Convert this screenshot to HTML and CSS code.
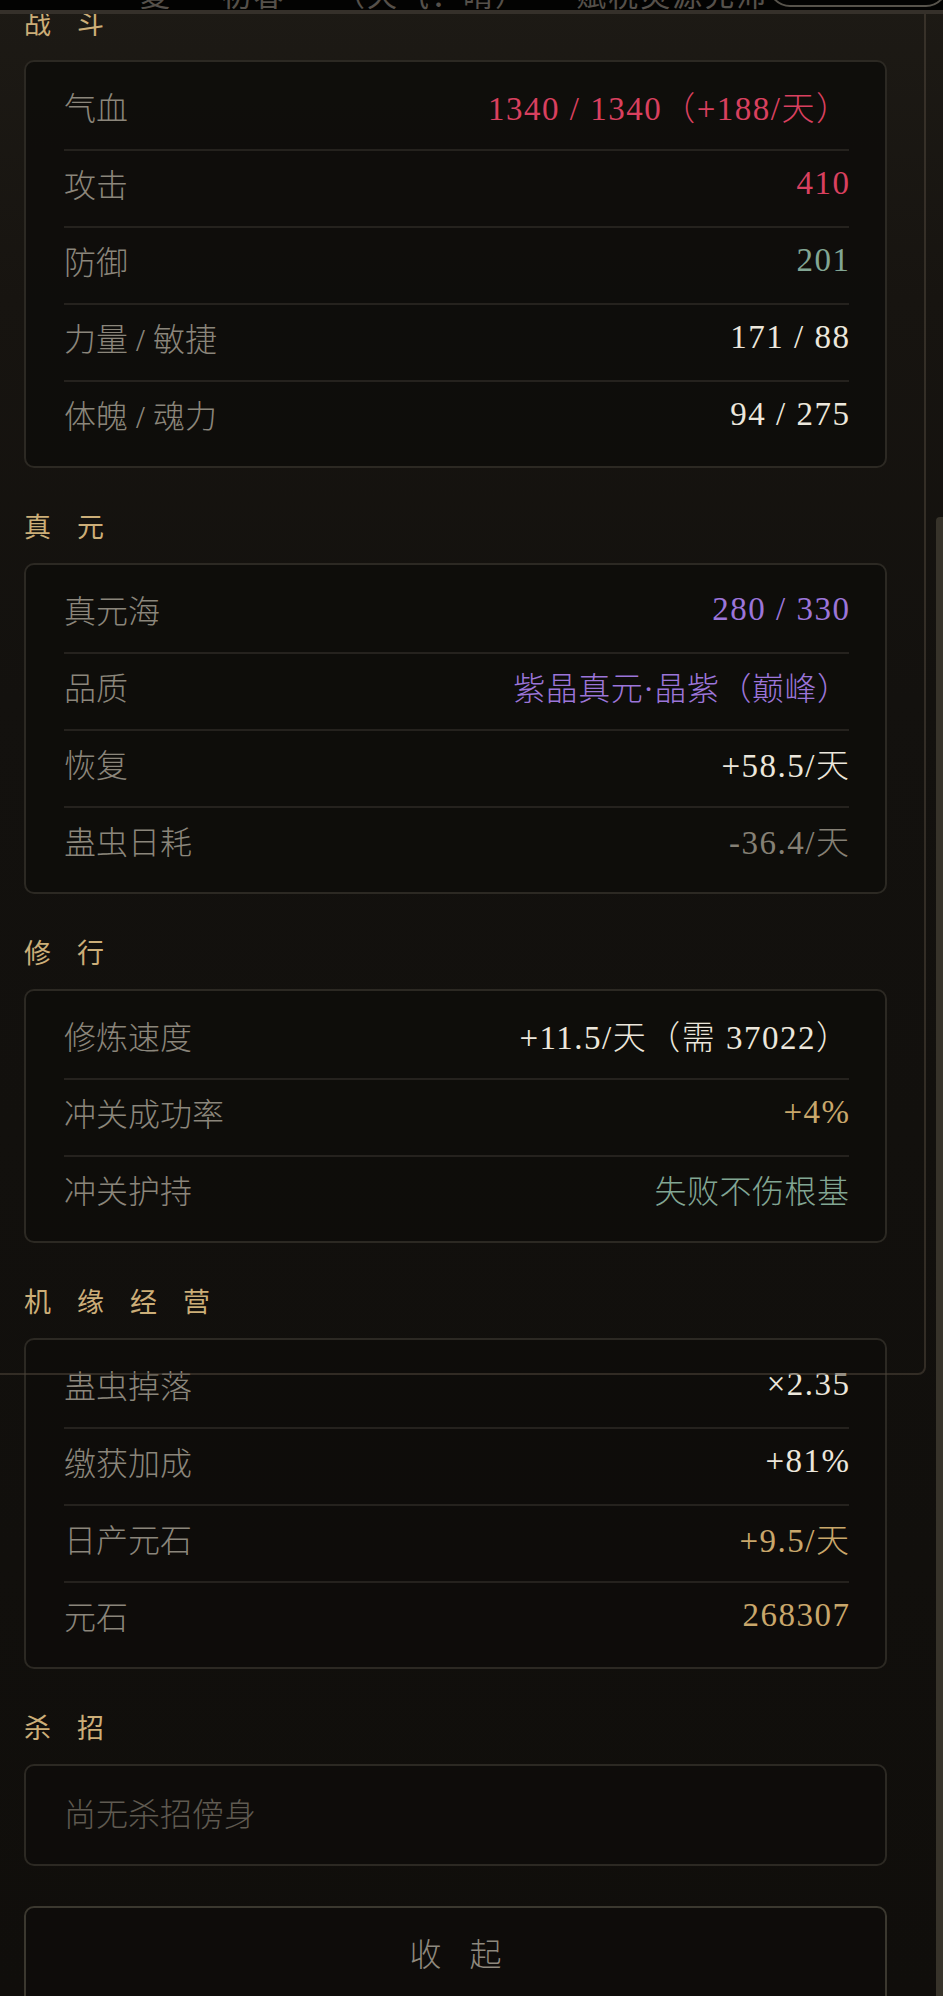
FILE: index.html
```html
<!DOCTYPE html>
<html lang="zh-CN">
<head>
<meta charset="utf-8">
<title>属性</title>
<link rel="stylesheet" href="styles.css">
</head>
<body>
<div class="backdrop-panel"></div>
<div class="scroll-thumb"></div>
<header class="topbar">
  <span class="topbar-text">夏 · 初春 · （天气：晴） · 赋税灵源充沛</span>
  <span class="topbar-pill"></span>
</header>
<main class="sheet">
  <section class="section">
    <h2 class="section-title">战斗</h2>
    <div class="card">
      <div class="row"><span class="label">气血</span><span class="value red">1340 / 1340（+188/天）</span></div>
      <div class="row"><span class="label">攻击</span><span class="value red">410</span></div>
      <div class="row"><span class="label">防御</span><span class="value green">201</span></div>
      <div class="row"><span class="label">力量 / 敏捷</span><span class="value">171 / 88</span></div>
      <div class="row"><span class="label">体魄 / 魂力</span><span class="value">94 / 275</span></div>
    </div>
  </section>
  <section class="section">
    <h2 class="section-title">真元</h2>
    <div class="card">
      <div class="row"><span class="label">真元海</span><span class="value purple">280 / 330</span></div>
      <div class="row"><span class="label">品质</span><span class="value text purple">紫晶真元·晶紫（巅峰）</span></div>
      <div class="row"><span class="label">恢复</span><span class="value">+58.5/天</span></div>
      <div class="row"><span class="label">蛊虫日耗</span><span class="value muted">-36.4/天</span></div>
    </div>
  </section>
  <section class="section">
    <h2 class="section-title">修行</h2>
    <div class="card">
      <div class="row"><span class="label">修炼速度</span><span class="value">+11.5/天（需 37022）</span></div>
      <div class="row"><span class="label">冲关成功率</span><span class="value gold">+4%</span></div>
      <div class="row"><span class="label">冲关护持</span><span class="value text green">失败不伤根基</span></div>
    </div>
  </section>
  <section class="section">
    <h2 class="section-title">机缘经营</h2>
    <div class="card">
      <div class="row"><span class="label">蛊虫掉落</span><span class="value">×2.35</span></div>
      <div class="row"><span class="label">缴获加成</span><span class="value">+81%</span></div>
      <div class="row"><span class="label">日产元石</span><span class="value gold">+9.5/天</span></div>
      <div class="row"><span class="label">元石</span><span class="value gold">268307</span></div>
    </div>
  </section>
  <section class="section">
    <h2 class="section-title">杀招</h2>
    <div class="card card-empty">
      <span class="empty">尚无杀招傍身</span>
    </div>
  </section>
  <button class="collapse" type="button">收起</button>
</main>
</body>
</html>
```
FILE: styles.css
```css
html, body {
  margin: 0;
  padding: 0;
}
body {
  position: relative;
  min-height: 1996px;
  overflow: hidden;
  background: linear-gradient(180deg, #1d1a15 0px, #171410 300px, #13110e 700px, #100e0b 1996px);
  font-family: "Liberation Serif", "Noto Sans CJK SC", serif;
  color: #ece7dc;
}
.topbar {
  position: absolute;
  left: 0;
  top: 0;
  right: 0;
  height: 10px;
  background: #030302;
  border-bottom: 4px solid #35302a;
  overflow: hidden;
  display: flex;
  align-items: flex-end;
  z-index: 5;
}
.topbar-text {
  margin-left: 140px;
  margin-bottom: 2px;
  font-family: "Noto Sans CJK SC", sans-serif;
  font-size: 30px;
  line-height: 30px;
  color: #55504a;
  white-space: nowrap;
  letter-spacing: 2px;
}
.topbar-pill {
  margin-left: auto;
  margin-right: 17px;
  margin-bottom: 3px;
  width: 176px;
  height: 44px;
  border: 2px solid #57534b;
  border-radius: 22px;
  flex: none;
}
.backdrop-panel {
  position: absolute;
  left: -10px;
  top: -20px;
  width: 936px;
  height: 1395px;
  border: 2px solid rgba(78, 70, 58, 0.55);
  border-radius: 8px;
  box-sizing: border-box;
  z-index: 3;
  pointer-events: none;
}
.scroll-thumb {
  position: absolute;
  left: 936px;
  top: 517px;
  width: 7px;
  height: 1500px;
  background: #37332a;
  border-radius: 4px 0 0 0;
  z-index: 4;
}
.sheet {
  position: relative;
  z-index: 2;
  width: 863px;
  padding: 2px 0 0 24px;
}
.section {
  margin-bottom: 37px;
}
.section-title {
  margin: 0 0 16px 0;
  height: 42px;
  font-family: "Noto Sans CJK SC", sans-serif;
  font-size: 27px;
  line-height: 42px;
  font-weight: 400;
  letter-spacing: 26px;
  color: #ccae78;
}
.card {
  background: rgba(14, 12, 10, 0.88);
  border: 2px solid #2c2923;
  border-radius: 10px;
  padding: 12px 36px 9px 38px;
}
.row {
  height: 64px;
  padding-bottom: 11px;
  display: flex;
  align-items: center;
  justify-content: space-between;
  font-size: 32px;
}
.row + .row {
  border-top: 2px solid #25221e;
}
.label {
  color: #8b867b;
  font-weight: 300;
}
.value {
  color: #ece7dc;
  font-weight: 300;
  white-space: nowrap;
  font-size: 33px;
  letter-spacing: 1.5px;
  margin-right: -1.5px;
}
.value.text {
  font-size: 32px;
  letter-spacing: 0.5px;
  margin-right: -0.5px;
}
.red { color: #d9405f; }
.green { color: #82a694; }
.purple { color: #9c75d9; }
.gold { color: #c9a76b; }
.muted { color: #858075; }
.card-empty {
  height: 92px;
  padding: 0 36px 6px 38px;
  display: flex;
  align-items: center;
}
.empty {
  font-size: 32px;
  font-weight: 300;
  color: #5f5a51;
}
.collapse {
  display: block;
  width: 863px;
  height: 110px;
  margin: 40px 0 0 0;
  padding: 0 0 18px 0;
  background: rgba(14, 12, 10, 0.88);
  border: 2px solid #3b382f;
  border-radius: 10px;
  font-family: "Noto Sans CJK SC", sans-serif;
  font-size: 32px;
  font-weight: 300;
  letter-spacing: 28px;
  text-indent: 28px;
  color: #8e897e;
  line-height: 48px;
  text-align: center;
  box-sizing: border-box;
}
```
